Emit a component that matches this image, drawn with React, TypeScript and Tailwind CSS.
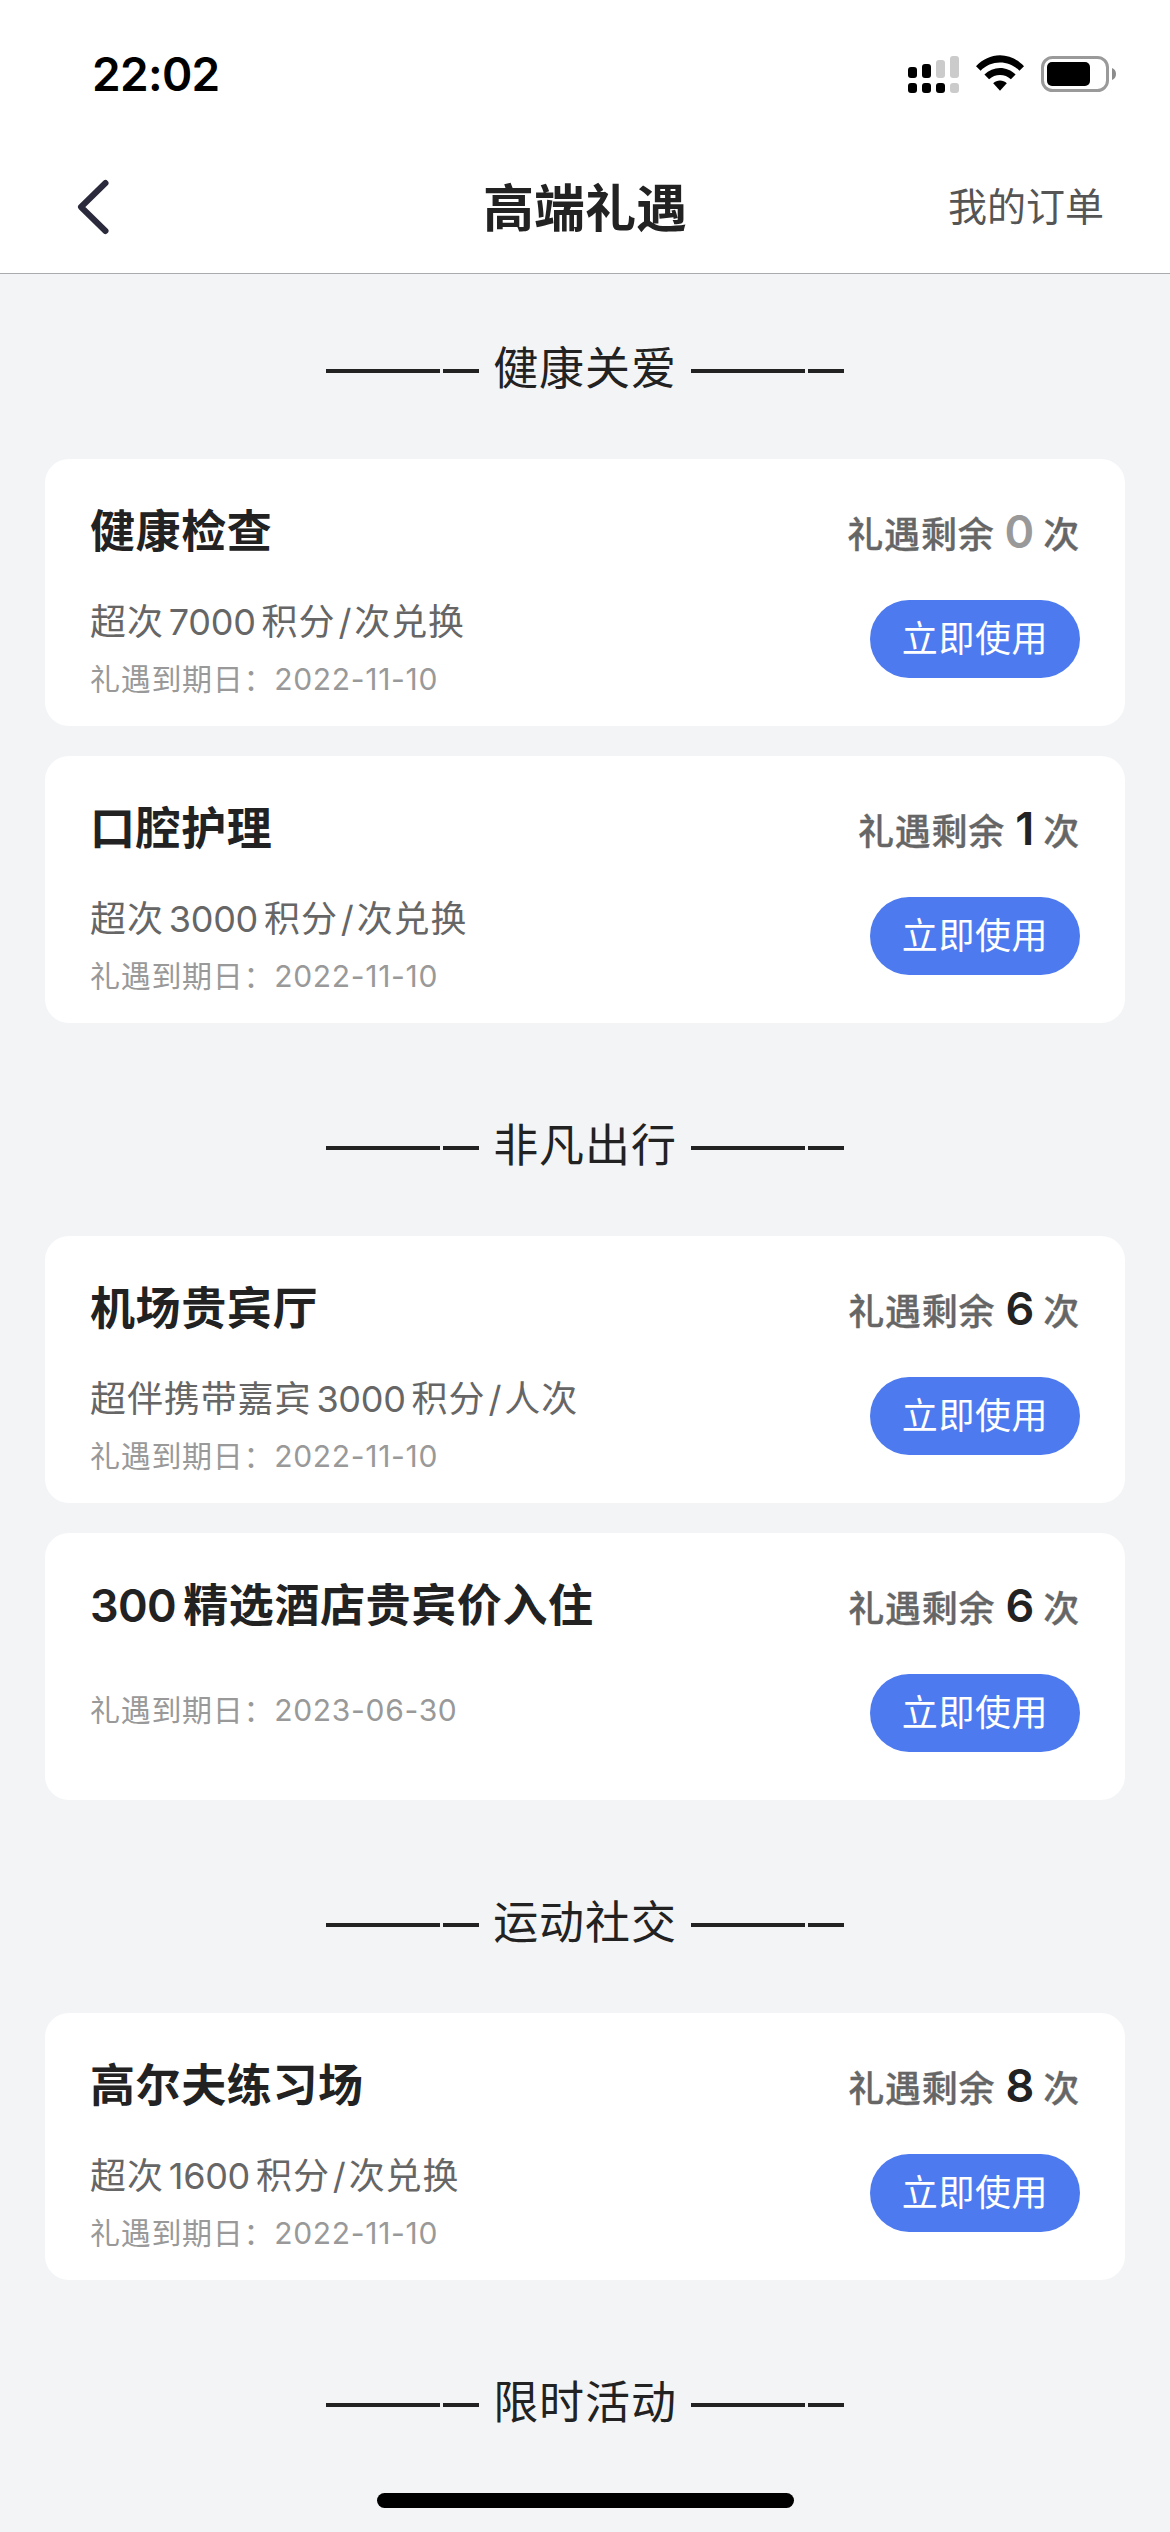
type Benefit = {
  title: string;
  rule?: string;
  expires: string;
  left: number;
};

type Section = {
  name: string;
  items: Benefit[];
};

const sections: Section[] = [
  {
    name: '健康关爱',
    items: [
      { title: '健康检查', rule: '超次7000积分/次兑换', expires: '2022-11-10', left: 0 },
      { title: '口腔护理', rule: '超次3000积分/次兑换', expires: '2022-11-10', left: 1 },
    ],
  },
  {
    name: '非凡出行',
    items: [
      { title: '机场贵宾厅', rule: '超伴携带嘉宾3000积分/人次', expires: '2022-11-10', left: 6 },
      { title: '300精选酒店贵宾价入住', expires: '2023-06-30', left: 6 },
    ],
  },
  {
    name: '运动社交',
    items: [
      { title: '高尔夫练习场', rule: '超次1600积分/次兑换', expires: '2022-11-10', left: 8 },
    ],
  },
  { name: '限时活动', items: [] },
];

// Adds a little air between Chinese characters, numbers and slashes
const Mixed = ({ text }: { text: string }) => (
  <>
    {text.split(/(\d+|\/)/).filter(Boolean).map((part, i) => {
      if (part === '/') return <span key={i} className="ml-[3px] mr-[2px]">{part}</span>;
      if (/^\d+$/.test(part)) {
        return (
          <span key={i} className={i === 0 ? 'mr-[7px] font-semibold tracking-[-0.6px]' : 'ml-[5px] mr-[6px] tracking-[-0.3px]'}>
            {part}
          </span>
        );
      }
      return <span key={i}>{part}</span>;
    })}
  </>
);

const StatusBar = () => (
  <div className="flex h-[141px] items-start justify-between pl-[92px] pr-[53px] text-black">
    <div className="mt-[46px] text-[46px] font-semibold leading-[56px] tracking-[-0.7px]">22:02</div>
    <div className="mt-[55px] flex items-start">
      <svg width="52" height="38" viewBox="0 0 52 38" className="mr-[16px]">
        <rect x="0" y="12" width="9" height="11" rx="3" />
        <rect x="14" y="9" width="9" height="14" rx="3" />
        <rect x="28" y="5" width="9" height="18" rx="3" fill="#cbcbcb" />
        <rect x="42" y="1" width="9" height="22" rx="3" fill="#cbcbcb" />
        <rect x="0" y="28" width="9" height="10" rx="3" />
        <rect x="14" y="28" width="9" height="10" rx="3" />
        <rect x="28" y="28" width="9" height="10" rx="3" />
        <rect x="42" y="28" width="9" height="10" rx="3" fill="#cbcbcb" />
      </svg>
      <svg width="48" height="36" viewBox="0 0 48 36" className="mr-[17px]">
        <path d="M0 11.2C6.6 4.2 15 .2 24 .2s17.4 4 24 11l-4.6 4.5C38 10.4 31.3 7.5 24 7.5S10 10.4 4.6 15.7Z" />
        <path d="M8.4 19.6C12.7 15.3 18.2 13 24 13s11.3 2.3 15.6 6.6l-4.7 4.7C31.9 21.500 28.100 20 24 20s-7.900 1.500-10.900 4.300Z" />
        <path d="M17.2 28.3C19.1 26.6 21.5 25.6 24 25.6s4.9 1 6.8 2.700L24 35.800Z" />
      </svg>
      <svg width="76" height="38" viewBox="0 0 76 38">
        <rect x="1.5" y="2.5" width="65" height="33" rx="10" fill="none" stroke="#9a9a9a" strokeWidth="3" />
        <rect x="6" y="7" width="43" height="24" rx="5" />
        <path d="M71 13c2.6 1 4 3.300 4 6s-1.400 5-4 6Z" fill="#8c8c8c" />
      </svg>
    </div>
  </div>
);

const NavBar = () => (
  <div className="grid h-[132px] grid-cols-3 items-center px-[66px]">
    <svg width="36" height="60" viewBox="0 0 36 60" className="ml-[9px]">
      <path d="M30.500 6 6 30l24.500 24" fill="none" stroke="#2b2a3c" strokeWidth="6" strokeLinecap="round" strokeLinejoin="round" />
    </svg>
    <h1 className="mt-[3px] text-center text-[51px] font-bold leading-[60px] text-[#222]">高端礼遇</h1>
    <a className="text-right text-[39px] leading-[50px] text-[#555]">我的订单</a>
  </div>
);

const Dashes = () => (
  <div className="mt-[6px] flex gap-[3px]">
    <div className="h-[4px] w-[114px] bg-[#222]" />
    <div className="h-[4px] w-[36px] bg-[#222]" />
  </div>
);

const BenefitCard = ({ item }: { item: Benefit }) => (
  <div className="mb-[30px] flex h-[267px] justify-between rounded-[24px] bg-white px-[45px]">
    <div className="flex flex-col">
      <h3 className="mt-[43px] text-[45px] font-bold leading-[60px] tracking-[0.6px] text-[#222]">
        <Mixed text={item.title} />
      </h3>
      {item.rule && (
        <p className="mt-[35px] text-[36px] leading-[50px] tracking-[0.9px] text-[#666]">
          <Mixed text={item.rule} />
        </p>
      )}
      <p className={`text-[30px] leading-[42px] tracking-[0.7px] text-[#999] ${item.rule ? 'mt-[11px]' : 'mt-[53px]'}`}>
        礼遇到期日：{item.expires}
      </p>
    </div>
    <div className="flex flex-col items-end">
      <div className="mt-[43px] flex items-baseline text-[36px] font-medium leading-[60px] tracking-[0.8px] text-[#666]">
        <span className="[-webkit-text-stroke:0.3px_#666]">礼遇剩余</span>
        <span className={`ml-[10px] mr-[9px] text-[45px] font-semibold tracking-normal ${item.left > 0 ? 'text-[#222]' : 'text-[#999]'}`}>
          {item.left}
        </span>
        <span className="[-webkit-text-stroke:0.3px_#666]">次</span>
      </div>
      <button className="mt-[35px] h-[78px] w-[210px] rounded-full bg-[#4e7af0] text-[36px] leading-[50px] tracking-[0.6px] text-white">
        立即使用
      </button>
    </div>
  </div>
);

export default function App() {
  return (
    <div className="relative h-[2532px] w-[1170px] overflow-hidden bg-[#f3f4f6] font-['Inter','Noto_Sans_CJK_SC',sans-serif]">
      <header className="mb-[2px] border-b border-[#a9abae] bg-white">
        <StatusBar />
        <NavBar />
      </header>
      <main className="px-[45px]">
        {sections.map((section) => (
          <section key={section.name}>
            <div className="flex h-[183px] items-center justify-center gap-[14px]">
              <Dashes />
              <h2 className="mt-[2px] text-[45px] leading-[60px] tracking-[0.9px] text-[#222]">{section.name}</h2>
              <Dashes />
            </div>
            {section.items.map((item) => (
              <BenefitCard key={item.title} item={item} />
            ))}
          </section>
        ))}
      </main>
      <div className="absolute bottom-[24px] left-[377px] h-[15px] w-[417px] rounded-full bg-black" />
    </div>
  );
}
